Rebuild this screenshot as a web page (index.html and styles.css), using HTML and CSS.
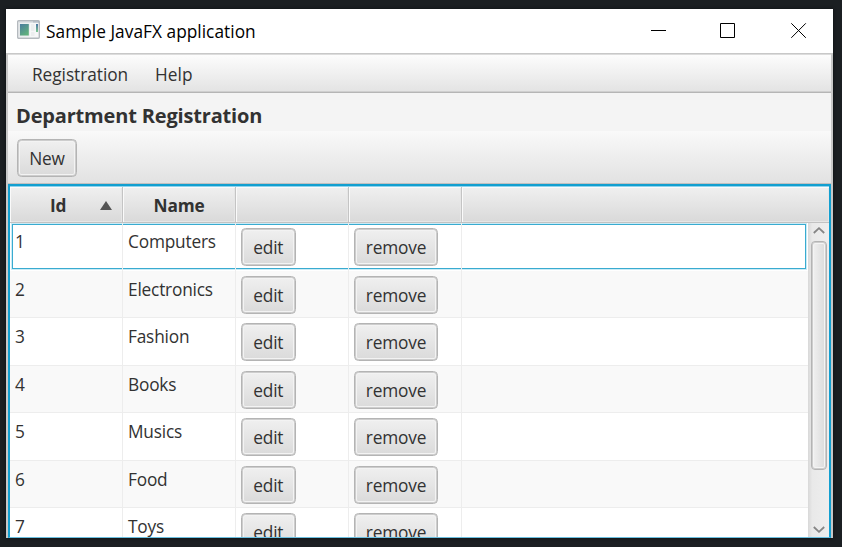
FILE: index.html
```
<!DOCTYPE html>
<html lang="en">
<head>
<meta charset="utf-8">
<title>Sample JavaFX application</title>
<link rel="stylesheet" href="styles.css">
</head>
<body>
<main class="window">
  <header class="titlebar">
    <svg class="app-icon" width="24" height="20" viewBox="0 0 24 20">
      <defs>
        <linearGradient id="pane" x1="0" y1="0" x2="0.6" y2="1"><stop offset="0" stop-color="#4a7c9f"/><stop offset="1" stop-color="#5fb07c"/></linearGradient>
        <linearGradient id="side" x1="0" y1="0" x2="0" y2="1"><stop offset="0" stop-color="#4d75a5"/><stop offset="1" stop-color="#7bc890"/></linearGradient>
      </defs>
      <rect x=".7" y=".7" width="21.600" height="17.600" rx="1" fill="#f6f7f8" stroke="#b4b9be" stroke-width="1.4"/>
      <path d="M2 1.500h14v1H2z" fill="#c5cbd1"/>
      <path d="M16 1.500h6v1h-6z" fill="#9aa5b2"/>
      <path d="M2 3.500h10.500v13H2z" fill="#e3e7e9"/>
      <path d="M3 4h8.800v11.500H3z" fill="url(#pane)"/>
      <path d="M14 4h3.500v7H14zM14 12h3.500v4H14z" fill="#eceeef"/>
      <path d="M19 4h2v8h-2z" fill="url(#side)"/>
    </svg>
    <span class="title">Sample JavaFX application</span>
    <svg class="controls" width="157" height="17" viewBox="0 0 157 17" fill="none" stroke="#000">
      <path d="M1 7.500h15M70.500 .5h14v14h-14z"/>
      <path d="M141.300 .3l14.500 14.500M155.800 .3l-14.500 14.500"/>
    </svg>
  </header>
  <div class="content">
    <nav class="menubar"><span class="menu-reg">Registration</span><span class="menu-help">Help</span></nav>
    <h1 class="heading"><span>Department Registration</span></h1>
    <div class="toolbar"><button class="btn new">New</button></div>
    <section class="table">
      <div class="head">
        <div class="th"><span class="id-label">Id</span><svg class="sort" width="12" height="9" viewBox="0 0 12 9"><path d="M6 0l6 9H0z" fill="#555"/></svg></div>
        <div class="th"><span class="name-label">Name</span></div>
        <div class="th"></div>
        <div class="th"></div>
        <div class="th last"></div>
      </div>
      <div class="body">
        <div class="rows">
          <div class="row selected"><div class="td id">1</div><div class="td">Computers</div><div class="td act"><button class="btn edit">edit</button></div><div class="td act"><button class="btn remove">remove</button></div></div>
          <div class="row"><div class="td id">2</div><div class="td">Electronics</div><div class="td act"><button class="btn edit">edit</button></div><div class="td act"><button class="btn remove">remove</button></div></div>
          <div class="row"><div class="td id">3</div><div class="td">Fashion</div><div class="td act"><button class="btn edit">edit</button></div><div class="td act"><button class="btn remove">remove</button></div></div>
          <div class="row"><div class="td id">4</div><div class="td">Books</div><div class="td act"><button class="btn edit">edit</button></div><div class="td act"><button class="btn remove">remove</button></div></div>
          <div class="row"><div class="td id">5</div><div class="td">Musics</div><div class="td act"><button class="btn edit">edit</button></div><div class="td act"><button class="btn remove">remove</button></div></div>
          <div class="row"><div class="td id">6</div><div class="td">Food</div><div class="td act"><button class="btn edit">edit</button></div><div class="td act"><button class="btn remove">remove</button></div></div>
          <div class="row"><div class="td id">7</div><div class="td">Toys</div><div class="td act"><button class="btn edit">edit</button></div><div class="td act"><button class="btn remove">remove</button></div></div>
        </div>
        <div class="scrollbar">
          <svg width="12" height="7" viewBox="0 0 12 7" fill="none" stroke="#858585" stroke-width="1.800"><path d="M.8 6L6 1.200 11.200 6"/></svg>
          <div class="thumb"></div>
          <svg class="down" width="12" height="7" viewBox="0 0 12 7" fill="none" stroke="#858585" stroke-width="1.800"><path d="M.8 1L6 5.800 11.200 1"/></svg>
        </div>
      </div>
    </section>
  </div>
</main>
</body>
</html>
```
FILE: styles.css
```
* { box-sizing: border-box; }
html, body { margin: 0; height: 100%; overflow: hidden; }
body {
  background: #1b1f22;
  padding: 9px 9px 9px 6px;
  font-family: "Open Sans", "Noto Sans", sans-serif;
  font-size: 17.3px;
  font-weight: 370;
  letter-spacing: -0.2px;
  line-height: 24px;
  color: #323232;
}
.window {
  width: 827px;
  height: 529px;
  background: #f4f4f4;
  display: flex;
  flex-direction: column;
  overflow: hidden;
  box-shadow: 0 0 3px #0d1012;
}
.titlebar {
  height: 44px;
  flex: none;
  background: #fff;
  display: flex;
  align-items: flex-start;
  padding: 11px 26px 0 11px;
}
.app-icon { flex: none; }
.title { color: #000; margin: 0 0 0 5px; white-space: nowrap; letter-spacing: 0.03px; }
.controls { margin: 3px 0 0 auto; flex: none; }
.content {
  flex: 1;
  min-height: 0;
  border: solid #c8c8c8;
  border-width: 1px 2px 0;
  display: flex;
  flex-direction: column;
}
.menubar {
  height: 39px;
  flex: none;
  display: flex;
  padding: 9px 24px 0;
  border-bottom: 1px solid #b5b5b5;
  box-shadow: inset 0 -1px #cfcfcf, inset 0 1px #dcdcdc;
  background: linear-gradient(#fdfdfd, #e3e3e3);
}
.menu-reg { letter-spacing: -0.05px; }
.menu-help { margin-left: 27px; letter-spacing: 0; }
.heading {
  height: 38px;
  flex: none;
  margin: 0;
  padding: 11px 0 0 8px;
  font-size: 20px;
  font-weight: 700;
  letter-spacing: -0.17px;
  line-height: 24px;
}
.toolbar {
  height: 53px;
  flex: none;
  padding: 8px 9px;
  background: linear-gradient(#f9f9f9, #e2e2e2);
  border-bottom: 1px solid #c0c0c0;
}
.btn {
  display: block;
  height: 38px;
  padding: 2px 0 0;
  border: 1px solid #b4b4b4;
  border-radius: 4.500px;
  background: linear-gradient(#f0f0f0, #dadada);
  box-shadow: inset 0 0 0 1px #cdcdcd, inset 0 0 0 2px #f3f3f3;
  font: inherit;
  letter-spacing: inherit;
  color: #323232;
}
.new { width: 60px; }
.edit { width: 54.500px; }
.remove { width: 84px; }
.table {
  flex: 1;
  min-height: 0;
  border: solid #129fd0;
  border-width: 2px 2px 1px;
  border-bottom-color: #6abfe0;
  background: #fff;
  display: flex;
  flex-direction: column;
}
.head {
  height: 37px;
  flex: none;
  display: flex;
  border-bottom: 1px solid #c2c2c2;
  border-top: 1px solid #8fd3ec;
  background: linear-gradient(#f0f0f0, #d9d9d9);
  font-weight: 700;
}
.th {
  width: 113px;
  flex: none;
  height: 35px;
  padding-top: 7px;
  display: flex;
  justify-content: center;
  border-right: 1px solid #c4c4c4;
  box-shadow: inset 1px 1px #fafafa, inset -1px -1px #e6e6e6;
}
.last { width: auto; flex: 1; border: 0; }
.th:first-child { justify-content: flex-start; padding-left: 40px; }
.sort { margin: 7px 10px 0 auto; }
.body { flex: 1; min-height: 0; display: flex; overflow: hidden; }
.rows { flex: 1; overflow: hidden; }
.row {
  height: 47.500px;
  display: flex;
  position: relative;
  background: #fff;
  border-bottom: 1px solid #ededed;
}
.row:nth-child(even) { background: #f9f9f9; }
.td { width: 113px; flex: none; padding: 7px 5px 0; border-right: 1px solid #ededed; }
.act { padding-top: 5px; }
.selected { border-bottom: 0; }
.selected .td { position: relative; z-index: 1; }
.selected::after {
  content: "";
  position: absolute;
  inset: 1px 2px 1.500px 2px;
  border: 1px solid #39abd0;
  box-shadow: 0 0 0 1px rgba(80, 190, 225, .3);
}
.scrollbar {
  width: 21px;
  flex: none;
  display: flex;
  flex-direction: column;
  align-items: center;
  padding: 4px 0 4px;
  background: linear-gradient(90deg, #d8d8d8, #e9e9e9 20%, #eee);
}
.thumb {
  width: 16px;
  height: 229px;
  margin-top: 7px;
  border: 1px solid #b4b4b4;
  border-radius: 4px;
  background: linear-gradient(90deg, #f2f2f2, #dadada);
  box-shadow: inset 0 0 0 1px #cdcdcd, inset 0 0 0 2px #f4f4f4;
}
.down { margin-top: auto; }
```
